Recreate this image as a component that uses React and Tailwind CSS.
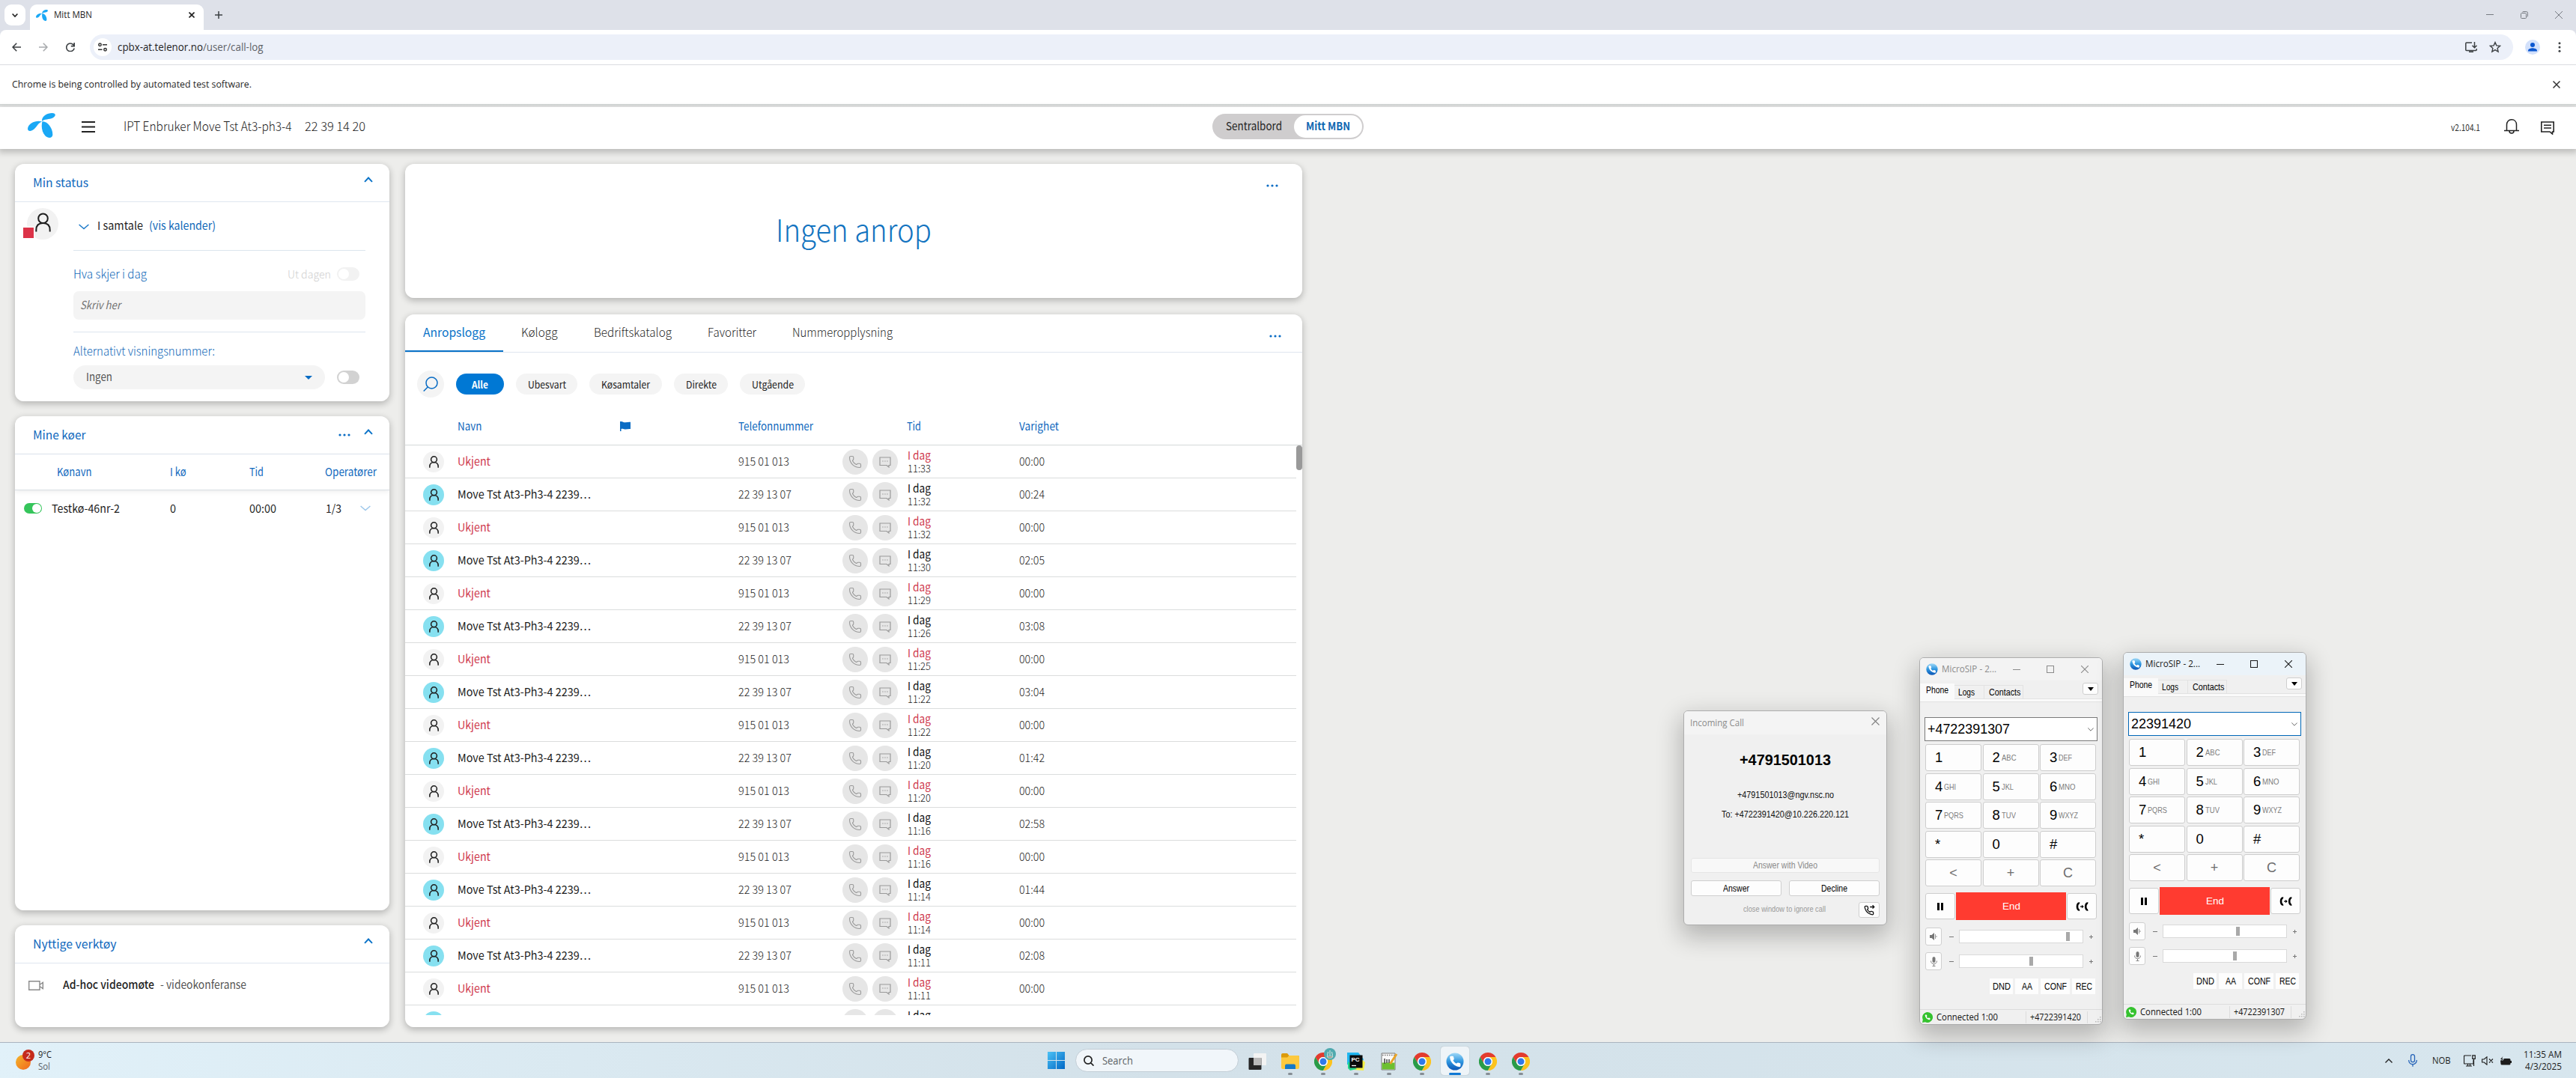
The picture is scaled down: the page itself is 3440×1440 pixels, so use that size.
import React, { useLayoutEffect, useRef, useState } from "react";
import { Phone } from "lucide-react";

const TN = "font-['Noto_Sans_CJK_SC','Noto_Sans',sans-serif]";
const UI = "font-['Open_Sans','Noto_Sans',sans-serif]";
const AR = "font-['Liberation_Sans',Arial,sans-serif]";

/* A one-line label whose glyphs are condensed or widened to fill w pixels. */
function T({ w, className = "", children }) {
  const ref = useRef(null);
  const [k, setK] = useState(1);
  useLayoutEffect(() => {
    const range = document.createRange();
    range.selectNodeContents(ref.current);
    const natural = range.getBoundingClientRect().width;
    if (natural) setK(w / natural);
  }, [w]);
  return (
    <span className={"inline-block shrink-0 whitespace-nowrap " + className} style={{ width: w }}>
      <span ref={ref} className="inline-block origin-left whitespace-nowrap" style={{ transform: `scaleX(${k})` }}>
        {children}
      </span>
    </span>
  );
}

function Logo({ className }) {
  return (
    <svg viewBox="0 0 37 33" className={className} fill="#1aa8f5" preserveAspectRatio="none">
      <path d="M19 11C18.500 4 26 0 32.500 0C38 0 38 4 33.500 6.500C29 9 22 7.500 19 11Z" />
      <path d="M19 11.500C12 9 .5 13.500 0 21C0 24.500 4.500 25 8.500 21.500C13 17.500 14 13 19 11.500Z" />
      <path d="M19.500 11.300C26 10.500 33.500 20 33.300 29C33 34 27 34 23.500 30.500C18.500 25 18 17 19.500 11.300Z" />
    </svg>
  );
}

function Line({ d, className, sw = 1.5, vb = "0 0 24 24" }) {
  return (
    <svg viewBox={vb} className={"shrink-0 " + className} fill="none" stroke="currentColor" strokeWidth={sw}>
      <path d={d} />
    </svg>
  );
}

function Dots({ className = "" }) {
  return (
    <svg viewBox="0 0 16 4" className={"h-1 w-4 shrink-0 " + className} fill="#0a6cc4">
      <circle cx="2" cy="2" r="1.6" />
      <circle cx="8" cy="2" r="1.6" />
      <circle cx="14" cy="2" r="1.6" />
    </svg>
  );
}

function Person({ className, sw = 2.1 }) {
  return (
    <svg viewBox="0 0 22 27" className={className} fill="none" stroke="#1f1f1f" strokeWidth={sw}>
      <circle cx="11" cy="8" r="6.600" />
      <path d="M1.400 26.500V24C1.400 18 5 14.500 11 14.500S20.600 18 20.600 24V26.500" />
    </svg>
  );
}

/* ---------- Browser chrome ---------- */

function TabStrip() {
  return (
    <div className="flex h-10 items-start bg-[#dee1e9] pt-1.5">
      <div className="ml-1.5 flex h-7 w-7 items-center justify-center rounded-[9px] bg-white">
        <Line className="h-2 w-2 text-[#222]" vb="0 0 8 8" sw={1.7} d="M.6 2.500 4 6l3.400-3.500" />
      </div>
      <div className="ml-1.5 flex h-[34px] w-[232px] items-center rounded-t-[9px] bg-white pb-1.5">
        <Logo className="ml-2 h-[15px] w-4" />
        <T w={51} className="ml-2 text-[12px] leading-4 text-[#1f1f1f]">Mitt MBN</T>
        <Line className="ml-[129px] h-2 w-2 text-[#222]" vb="0 0 8 8" sw={1.6} d="M.5.500l7 7M7.500.500l-7 7" />
      </div>
      <Line className="ml-[15px] mt-[9px] h-2.5 w-2.5 text-[#3c4043]" vb="0 0 10 10" sw={1.5} d="M5 0v10M0 5h10" />
      <div className="ml-auto mr-[18px] flex items-center gap-9 pt-[9px] text-[#777b82]">
        <Line className="h-2.5 w-2.5" vb="0 0 10 10" sw={1} d="M0 4.500h10" />
        <Line className="h-2.5 w-2.5" vb="0 0 10 10" sw={1} d="M.5 3.500q0-1 1-1h5q1 0 1 1v5q0 1-1 1h-5q-1 0-1-1zM2.500 1Q3 .500 4 .500h3.500q2 0 2 2V6q0 1-.6 1.500" />
        <Line className="h-2.5 w-2.5" vb="0 0 10 10" sw={1} d="M0 0l10 10M10 0 0 10" />
      </div>
    </div>
  );
}

function Toolbar() {
  return (
    <div className="flex h-[47px] items-center bg-[#dee1e9]">
      <div className="flex h-full w-full items-center rounded-t-[8px] border-b border-[#dadce0] bg-white">
        <Line className="ml-4 h-3 w-3 text-[#3c4043]" vb="0 0 12 12" sw={1.6} d="M12 6H1M6.200.700 1 6l5.200 5.300" />
        <Line className="ml-6 h-3 w-3 text-[#a8abae]" vb="0 0 12 12" sw={1.6} d="M0 6h11M5.800.700 11 6l-5.200 5.300" />
        <Line className="ml-6 h-3 w-3 text-[#3c4043]" vb="0 0 12 12" sw={1.6} d="M11 4.500A5.300 5.300 0 1 0 11.200 7.500M11.200 0v4.600H6.800" />
        <div className="ml-5 flex h-[34px] w-[3236px] items-center rounded-full bg-[#ecf0f9] pl-[5px]">
          <div className="flex h-6 w-6 items-center justify-center rounded-full bg-white">
            <svg viewBox="0 0 12 12" className="h-3 w-3" fill="none" stroke="#333" strokeWidth="1.5">
              <circle cx="2.500" cy="2.800" r="1.700" />
              <path d="M6 2.800h6M0 9.200h5.500" />
              <circle cx="9.500" cy="9.200" r="1.700" />
            </svg>
          </div>
          <T w={194.500} className="ml-2 text-[14px] leading-5 text-[#1f1f1f]">cpbx-at.telenor.no<span className="text-[#5f6368]">/user/call-log</span></T>
          <div className="ml-auto mr-4 flex items-center gap-4">
            <Line className="h-4 w-4 text-[#3c4043]" vb="0 0 16 16" sw={1.5} d="M9 2H1.800q-1 0-1 1v8.500q0 1 1 1h12.400q1 0 1-1V10M5 14.200h6M12.500 1v7.500M9.500 5.700l3 3 3-3" />
            <Line className="h-4 w-4 text-[#3c4043]" vb="0 0 16 16" sw={1.4} d="M8 1.600l1.900 4.300 4.700.4-3.500 3.100 1 4.600L8 11.600 3.900 14l1-4.600L1.400 6.300l4.700-.4z" />
          </div>
        </div>
        <svg viewBox="0 0 20 20" className="ml-4 h-5 w-5">
          <circle cx="10" cy="10" r="10" fill="#d3e1fb" />
          <circle cx="10" cy="7" r="3" fill="#0b57d0" />
          <path d="M4 15.500v-1C4 12 8 11.200 10 11.200s6 .800 6 3.300v1z" fill="#0b57d0" />
        </svg>
        <svg viewBox="0 0 4 14" className="ml-6 h-3.5 w-1" fill="#3c4043">
          <circle cx="2" cy="1.700" r="1.500" />
          <circle cx="2" cy="7" r="1.500" />
          <circle cx="2" cy="12.300" r="1.500" />
        </svg>
      </div>
    </div>
  );
}

function AppHeader() {
  return (
    <div className={"relative z-10 flex h-14 items-center bg-white shadow-[0_3px_8px_2px_rgba(0,0,0,0.2)] " + TN}>
      <Logo className="mb-[7px] ml-[37px] h-[33px] w-[37px]" />
      <Line className="ml-[35px] mt-[-4px] h-[15px] w-[18px] text-[#222]" vb="0 0 18 15" sw={1.8} d="M0 1h18M0 7.500h18M0 14h18" />
      <T w={224.500} className="ml-[38px] mt-[-7px] text-[17px] font-light leading-6 text-[#1c1c1c]">IPT Enbruker Move Tst At3-ph3-4</T>
      <T w={81} className="ml-[17px] mt-[-7px] text-[17px] font-light leading-6 text-[#1c1c1c]">22 39 14 20</T>
      <div className="mb-[4px] ml-[1131px] flex h-[34px] w-[202px] items-center rounded-full bg-[#cfcdce] pl-[18px] pr-0.5">
        <T w={75} className="-mt-0.5 text-[15px] leading-5 text-[#1f1f1f]">Sentralbord</T>
        <div className="ml-auto flex h-[30px] w-[91px] items-center justify-center rounded-full bg-white">
          <T w={59} className="-mt-0.5 text-[15px] font-bold leading-5 text-[#0f68b2]">Mitt MBN</T>
        </div>
      </div>
      <T w={39} className="-mt-0.5 ml-auto text-[12px] leading-4 text-[#333]">v2.104.1</T>
      <Line className="mb-1 ml-[32px] h-5 w-5 text-[#222]" vb="0 0 20 20" sw={1.5} d="M3.500 15.500V7.500C3.500 3.500 6 .8 10 .8s6.500 2.700 6.500 6.700v8M0 15.500h20M7 16c0 4 6 4 6 0" />
      <Line className="mb-px ml-[29px] mr-[29px] h-[18px] w-[18px] text-[#222]" vb="0 0 18 18" sw={1.6} d="M.8 1h16.400v13H15.500v3L12 14H.8zM4 5.300h10M4 9h10" />
    </div>
  );
}

/* ---------- Left column ---------- */

function CardHead({ w, title, dots }) {
  return (
    <div className="flex h-[51px] shrink-0 items-center border-b border-[#dfe6ef] pl-6">
      <T w={w} className="-mt-[3px] text-[16px] leading-5 text-[#0f68bd]">{title}</T>
      {dots && <Dots className="ml-auto" />}
      <Line className={(dots ? "ml-[18px]" : "ml-auto") + " mb-2 mr-[22px] h-2 w-3 text-[#0a73c8]"} vb="0 0 12 8" sw={1.9} d="M1 6.800 6 1.500l5 5.300" />
    </div>
  );
}

const card = "flex flex-col overflow-hidden rounded-[12px] bg-white";
const cardShadow = "rounded-[12px] shadow-[0_3px_8px_1px_rgba(0,0,0,0.22)]";

function StatusCard() {
  return (
    <div className={cardShadow}>
      <div className={card + " h-[317px]"}>
        <CardHead w={74} title="Min status" />
        <div className="flex">
          <div className="relative ml-4 mt-2 flex h-[42px] w-[42px] items-center justify-center rounded-full bg-[#f2f2f2]">
            <Person className="mb-1 h-[26px] w-[21px]" />
            <div className="absolute -left-[5px] top-[25px] h-[15px] w-[15px] border-r border-t border-white bg-[#dc3348]" />
          </div>
          <div className="ml-5 flex w-[390px] flex-col">
            <div className="flex h-16 items-center pb-px">
              <Line className="ml-[7px] mt-[2px] h-2 w-3.5 text-[#1a78c8]" vb="0 0 14 8" sw={1.4} d="M.6 1 7 6.500 13.400 1" />
              <T w={61} className="-mt-px ml-[11px] text-[15px] leading-5 text-[#1f1f1f]">I samtale</T>
              <T w={89} className="-mt-px ml-2 text-[15px] leading-5 text-[#0f68b8]">(vis kalender)</T>
            </div>
            <div className="h-px bg-[#dce5ee]" />
            <div className="flex h-[54px] items-center pt-2">
              <T w={98} className="-mt-[3px] text-[16px] font-light leading-5 text-[#0f68b8]">Hva skjer i dag</T>
              <T w={58} className="-mt-px ml-auto text-[15px] font-light leading-5 text-[#cfcfcf]">Ut dagen</T>
              <div className="ml-2 mr-2 flex h-[18px] w-[30px] items-center rounded-full bg-[#f2f2f2] pl-0.5">
                <div className="h-3.5 w-3.5 rounded-full bg-white" />
              </div>
            </div>
            <div className="flex h-[38px] items-center rounded-[7px] bg-[#f4f4f4] pl-[9px]">
              <T w={54} className="-mt-0.5 text-[15px] italic leading-5 text-[#757575]">Skriv her</T>
            </div>
            <div className="mt-4 h-px bg-[#dce5ee]" />
            <T w={189} className="mt-[14px] text-[16px] font-light leading-5 text-[#0f68b8]">Alternativt visningsnummer:</T>
            <div className="mt-[10px] flex items-center">
              <div className="flex h-8 w-[336px] items-center justify-between rounded-full bg-[#f4f4f4] pl-[17px] pr-[17px]">
                <T w={35} className="-mt-0.5 text-[15px] leading-5 text-[#555]">Ingen</T>
                <svg viewBox="0 0 10 5" className="h-[5px] w-2.5" fill="#0a6cc4"><path d="M0 0h10L5 5z" /></svg>
              </div>
              <div className="ml-4 flex h-[18px] w-[30px] items-center rounded-full bg-[#d2d2d2] pl-0.5">
                <div className="h-3.5 w-3.5 rounded-full bg-white" />
              </div>
            </div>
          </div>
        </div>
      </div>
    </div>
  );
}

function QueueCard() {
  const h = "-mt-0.5 text-[15px] leading-5 text-[#0f68bd]";
  const c = "-mt-px text-[15px] leading-5 text-[#1f1f1f]";
  return (
    <div className={cardShadow}>
      <div className={card + " h-[660px]"}>
        <CardHead w={70.500} title="Mine køer" dots />
        <div className="grid h-12 shrink-0 grid-cols-[151px_106px_101px_70px] items-center border-b border-[#d8dee4] pl-[56px] shadow-[0_2px_6px_rgba(0,0,0,0.07)]">
          <T w={46.500} className={h}>Kønavn</T>
          <T w={21.500} className={h}>I kø</T>
          <T w={19} className={h}>Tid</T>
          <T w={69} className={h}>Operatører</T>
        </div>
        <div className="grid h-12 grid-cols-[37px_158px_106px_102px_46px_20px] items-center pl-3">
          <div className="flex h-3.5 w-6 items-center justify-end rounded-full bg-[#35c55b] pr-px">
            <div className="h-3 w-3 rounded-full bg-white" />
          </div>
          <T w={91} className={c}>Testkø-46nr-2</T>
          <T w={8} className={c}>0</T>
          <T w={36} className={c}>00:00</T>
          <T w={21} className={c}>1/3</T>
          <Line className="h-2 w-3.5 text-[#9cc6ea]" vb="0 0 14 8" sw={1.4} d="M.6 1 7 6.500 13.400 1" />
        </div>
      </div>
    </div>
  );
}

function ToolsCard() {
  return (
    <div className={cardShadow}>
      <div className={card + " h-[136px]"}>
        <CardHead w={111.500} title="Nyttige verktøy" />
        <div className="flex h-[58px] items-center pl-[18px]">
          <Line className="h-[13px] w-5 text-[#8a8a8a]" vb="0 0 20 13" sw={1.4} d="M.7.700H15v11.600H.7zM15 5.500l4.300-3.200v8.400L15 7.500" />
          <T w={122} className="-mt-[3px] ml-[26px] text-[15px] font-medium leading-5 text-[#1f1f1f]">Ad-hoc videomøte</T>
          <T w={115} className="-mt-[3px] ml-2 text-[15px] leading-5 text-[#555]">- videokonferanse</T>
        </div>
      </div>
    </div>
  );
}

/* ---------- Call log ---------- */

const calls = [
  ["11:33", "00:00"], ["11:32", "00:24"], ["11:32", "00:00"], ["11:30", "02:05"], ["11:29", "00:00"],
  ["11:26", "03:08"], ["11:25", "00:00"], ["11:22", "03:04"], ["11:22", "00:00"], ["11:20", "01:42"],
  ["11:20", "00:00"], ["11:16", "02:58"], ["11:16", "00:00"], ["11:14", "01:44"], ["11:14", "00:00"],
  ["11:11", "02:08"], ["11:11", "00:00"],
];

const rowGrid = "grid h-11 shrink-0 grid-cols-[46px_375px_139px_40px_47px_149px_1fr] items-center border-b border-[#dbdddd] pl-6";

function Avatar({ missed }) {
  return (
    <div className={"flex h-7 w-7 items-center justify-center rounded-full " + (missed ? "bg-[#f2f2f2]" : "bg-[#86e0f0]")}>
      <Person className="h-[16px] w-[13px]" sw={2.600} />
    </div>
  );
}

function CallButton() {
  return (
    <div className="flex h-[34px] w-[34px] items-center justify-center rounded-full bg-[#e6e6e6]">
      <Phone className="h-[18px] w-[18px] text-[#9a9a9a]" strokeWidth={1.5} />
    </div>
  );
}

function ChatButton() {
  return (
    <div className="flex h-[34px] w-[34px] items-center justify-center rounded-full bg-[#e6e6e6]">
      <Line className="h-4 w-4 text-[#9a9a9a]" vb="0 0 16 16" sw={1.2} d="M1 2h14v10.500h-2V15l-3-2.500H1zM4.200 7h1.500M7.200 7h1.500M10.200 7h1.500" />
    </div>
  );
}

function CallRow({ time, dur, missed }) {
  return (
    <div className={rowGrid}>
      <Avatar missed={missed} />
      {missed ? (
        <T w={44} className="-mt-px text-[15px] leading-5 text-[#cf3a4e]">Ukjent</T>
      ) : (
        <T w={178} className="-mt-px text-[15px] leading-5 text-[#1c1c1c]">Move Tst At3-Ph3-4 2239…</T>
      )}
      <T w={missed ? 68 : 71} className="-mt-px text-[15px] font-light leading-5 text-[#1c1c1c]">{missed ? "915 01 013" : "22 39 13 07"}</T>
      <CallButton />
      <ChatButton />
      <div className="flex flex-col">
        <T w={31} className={"-mt-px text-[15px] leading-[17px] " + (missed ? "text-[#cf3a4e]" : "text-[#111]")}>I dag</T>
        <T w={31} className="mt-px text-[13px] font-light leading-[17px] text-[#1c1c1c]">{time}</T>
      </div>
      <T w={34} className="-mt-px text-[15px] font-light leading-5 text-[#1c1c1c]">{dur}</T>
    </div>
  );
}

function Pill({ w, className, children }) {
  return (
    <div className={"flex h-7 items-center justify-center rounded-full bg-[#f4f4f4] text-[#222] " + className}>
      <T w={w} className="-mt-px text-[13.500px] leading-5">{children}</T>
    </div>
  );
}

function LogCard() {
  const tab = "text-[16px] font-light leading-5 text-[#2a2a2a]";
  const h = "-mt-[3px] text-[15px] leading-5 text-[#0f68bd]";
  return (
    <div className={cardShadow}>
      <div className={card + " h-[952px]"}>
        <div className="flex h-[51px] shrink-0 border-b border-[#dfe6ef]">
          <div className="flex h-[50px] w-[131px] items-center justify-center border-b-2 border-[#0a73c8]">
            <T w={83} className="-mt-[3px] text-[16px] leading-5 text-[#0a73c8]">Anropslogg</T>
          </div>
          <div className="flex h-12 items-center pb-[3px] pl-6">
            <T w={48.500} className={tab}>Kølogg</T>
            <T w={104} className={tab + " ml-[48px]"}>Bedriftskatalog</T>
            <T w={65} className={tab + " ml-[48px]"}>Favoritter</T>
            <T w={134} className={tab + " ml-[48px]"}>Nummeropplysning</T>
          </div>
          <Dots className="ml-auto mr-7 mt-[27px]" />
        </div>
        <div className="mt-[24px] flex h-9 shrink-0 items-center gap-4 pl-4">
          <div className="flex h-9 w-9 items-center justify-center rounded-full bg-[#f4f4f4]">
            <svg viewBox="0 0 20 20" className="mr-px h-5 w-5" fill="none" stroke="#0a6cc4" strokeWidth="1.500">
              <circle cx="11.500" cy="8.500" r="7.500" />
              <path d="M6.500 13.800.7 19.500" />
            </svg>
          </div>
          <div className="flex h-7 w-16 items-center justify-center rounded-full bg-[#0078d4]">
            <T w={22} className="-mt-px text-[13.500px] font-bold leading-5 text-white">Alle</T>
          </div>
          <Pill w={51} className="w-[82px]">Ubesvart</Pill>
          <Pill w={65} className="w-[97px]">Køsamtaler</Pill>
          <Pill w={41} className="w-[72px]">Direkte</Pill>
          <Pill w={56} className="w-[87px]">Utgående</Pill>
        </div>
        <div className="mt-[16px] grid h-[48px] shrink-0 grid-cols-[217px_158px_225px_150px_1fr] items-center border-b border-[#d5d8d8] pl-[70px]">
          <T w={32.500} className={h}>Navn</T>
          <svg viewBox="0 0 14 13" className="mb-[3px] h-[13px] w-3.5" fill="#0a6cc4"><path d="M0 0c2.500-.5 4.500 1.500 7 1.300S11.500.5 14 .800V10c-2.500-.5-5 .8-7.500.5S3.500 9.500 1.500 10v3H0z" /></svg>
          <T w={100} className={h}>Telefonnummer</T>
          <T w={19} className={h}>Tid</T>
          <T w={53} className={h}>Varighet</T>
        </div>
        <div className="flex h-[761px] shrink-0 overflow-hidden">
          <div className="flex w-[1190px] flex-col">
            {calls.map(([t, d], i) => (
              <CallRow key={i} time={t} dur={d} missed={i % 2 === 0} />
            ))}
            <div className={rowGrid}>
              <Avatar />
              <span />
              <span />
              <CallButton />
              <ChatButton />
              <T w={31} className="-mt-[18px] text-[15px] leading-[17px] text-[#111]">I dag</T>
            </div>
          </div>
          <div className="h-[33px] w-2 rounded-full bg-[#999]" />
        </div>
      </div>
    </div>
  );
}

function NoCallCard() {
  return (
    <div className={cardShadow}>
      <div className={card + " h-[179px] items-center"}>
        <Dots className="ml-auto mr-8 mt-[27px]" />
        <T w={208} className="mt-[25px] text-[41px] font-light leading-[60px] text-[#1273c0]">Ingen anrop</T>
      </div>
    </div>
  );
}

/* ---------- Desktop windows ---------- */

const phoneD = "M22 16.920v3a2 2 0 0 1-2.180 2 19.790 19.790 0 0 1-8.630-3.070 19.500 19.500 0 0 1-6-6 19.790 19.790 0 0 1-3.070-8.670A2 2 0 0 1 4.110 2h3a2 2 0 0 1 2 1.720c.127.960.361 1.903.700 2.810a2 2 0 0 1-.450 2.110L8.090 9.910a16 16 0 0 0 6 6l1.270-1.270a2 2 0 0 1 2.110-.450c.907.339 1.850.573 2.810.700A2 2 0 0 1 22 16.920z";

function SipIcon({ className }) {
  return (
    <svg viewBox="0 0 24 24" className={className}>
      <defs>
        <linearGradient id="sip" x1="0" y1="0" x2="0" y2="1">
          <stop offset="0" stopColor="#9fd8f7" />
          <stop offset="0.500" stopColor="#2f97e0" />
          <stop offset="1" stopColor="#0b55b5" />
        </linearGradient>
      </defs>
      <circle cx="12" cy="12" r="11.500" fill="url(#sip)" />
      <path d={phoneD} fill="#fff" transform="translate(3.600 3.400) scale(0.720)" />
    </svg>
  );
}

const frame = "flex flex-col overflow-hidden rounded-[6px] border border-[#adadad] bg-[#f0f0f0] shadow-[0_12px_32px_4px_rgba(0,0,0,0.24)]";

function IncomingCall() {
  const btn = "flex h-[21px] items-center justify-center rounded-[3px] border border-[#cfcfcf] bg-[#fdfdfd]";
  return (
    <div className={"absolute left-[2248px] top-[949px] h-[287px] w-[272px] " + frame + " " + AR}>
      <div className="flex h-[31px] shrink-0 items-center justify-between bg-[#f4f4f4] pl-2 pr-[9px]">
        <T w={72} className={"text-[12px] leading-4 text-[#8b8b8b] " + UI}>Incoming Call</T>
        <Line className="mb-1 h-[11px] w-[11px] text-[#808080]" vb="0 0 11 11" sw={1.1} d="M.5.500l10 10M10.500.500l-10 10" />
      </div>
      <div className="flex flex-col items-center">
        <T w={122} className="mt-[22px] text-[20px] font-bold leading-6 text-black">+4791501013</T>
        <T w={129} className="mt-[27px] text-[12px] leading-4 text-[#111]">+4791501013@ngv.nsc.no</T>
        <T w={170} className="mt-2.5 text-[12px] leading-4 text-[#111]">To: +4722391420@10.226.220.121</T>
      </div>
      <div className="mt-[50px] px-[9px]">
        <div className="flex h-[20px] items-center justify-center rounded-[3px] border border-[#e5e5e5] bg-[#f8f8f8]">
          <T w={86} className="text-[12px] leading-4 text-[#8a8a8a]">Answer with Video</T>
        </div>
        <div className="mt-2.5 flex justify-between">
          <div className={btn + " w-[121px]"}><T w={35} className="text-[12px] leading-4 text-black">Answer</T></div>
          <div className={btn + " w-[121px]"}><T w={35} className="text-[12px] leading-4 text-black">Decline</T></div>
        </div>
        <div className="mt-2 flex">
          <T w={110} className="ml-[70px] mt-0.5 text-[10px] leading-4 text-[#9a9a9a]">close window to ignore call</T>
          <div className={btn + " ml-auto w-[28px]"}>
            <svg viewBox="0 0 24 24" className="h-[15px] w-[15px]" fill="none" stroke="#111" strokeWidth="2.200">
              <path d={phoneD} transform="translate(0 2) scale(0.920)" />
              <path d="M13 5.500h9M18.500 2l3.500 3.500L18.500 9" />
            </svg>
          </div>
        </div>
      </div>
    </div>
  );
}

const keys = [
  ["1", ""], ["2", "ABC", 19.500], ["3", "DEF", 18], ["4", "GHI", 16], ["5", "JKL", 16], ["6", "MNO", 22.500],
  ["7", "PQRS", 26], ["8", "TUV", 19], ["9", "WXYZ", 26], ["*", ""], ["0", ""], ["#", ""],
];

function Slider({ thumb }) {
  return (
    <div className="flex h-[18px] w-[166px] items-center border border-[#d9d9d9] bg-white" style={{ paddingLeft: thumb }}>
      <div className="h-3 w-[5px] bg-[#a9a9a9]" />
    </div>
  );
}

function VolumeRow({ icon, thumb }) {
  return (
    <div className="flex h-6 items-center">
      <div className="flex h-6 w-[22px] items-center justify-center rounded-[3px] border border-[#cfcfcf] bg-[#fdfdfd]">{icon}</div>
      <div className="ml-2.5 h-px w-1.5 bg-[#777]" />
      <div className="ml-[7px]"><Slider thumb={thumb} /></div>
      <Line className="ml-[8px] h-[5px] w-[5px] text-[#777]" vb="0 0 5 5" sw={1} d="M2.500 0v5M0 2.500h5" />
    </div>
  );
}

function MicroSip({ pos, active, number, remote, vol, mic }) {
  const key = "flex h-9 items-center rounded-[3px] border border-[#cdcdcd] bg-[#fdfdfd]";
  const tc = active ? "text-[#1a1a1a]" : "text-[#8b8b8b]";
  const chip = "flex h-[21px] items-center justify-center bg-[#fdfdfd]";
  return (
    <div className={"absolute h-[491px] w-[245px] " + frame + " " + AR + " " + pos}>
      <div className={"flex h-[30px] shrink-0 items-center pl-2 " + tc + (active ? " bg-[#ebf3f9]" : " bg-[#f3f3f3]")}>
        <SipIcon className="h-4 w-4" />
        <T w={73} className={"ml-[5px] text-[12px] leading-4 " + UI}>MicroSIP - 2...</T>
        <Line className="ml-[22px] h-2.5 w-2.5" vb="0 0 10 10" sw={1} d="M0 5.500h10" />
        <Line className="ml-[35px] h-2.5 w-2.5" vb="0 0 10 10" sw={1.1} d="M.5.500h9v9h-9z" />
        <Line className="ml-[36px] h-2.5 w-2.5" vb="0 0 10 10" sw={1.1} d="M0 0l10 10M10 0 0 10" />
      </div>
      <div className="flex h-[29px] shrink-0 items-end border-b border-[#e2e2e2] text-[12px] text-black">
        <div className="flex h-6 w-[46px] items-center justify-center bg-[#fafafa] pb-1.5"><T w={30} className="leading-4">Phone</T></div>
        <div className="flex flex-1 flex-col">
          <div className="flex">
            <div className="flex h-[18px] w-10 items-center border-r border-t border-[#e2e2e2] pl-[5px]"><T w={22} className="leading-4">Logs</T></div>
            <div className="flex h-[18px] w-[52px] items-center border-r border-t border-[#e2e2e2] pl-[6px]"><T w={42.500} className="leading-4">Contacts</T></div>
            <div className="-mt-[3px] ml-auto mr-[5px] flex h-4 w-[21px] items-center justify-center rounded-[3px] border border-[#cfcfcf] bg-[#fdfdfd]">
              <svg viewBox="0 0 8 5" className="h-[5px] w-2" fill="#000"><path d="M0 0h8L4 5z" /></svg>
            </div>
          </div>
          <div className="h-1 border-t border-[#e2e2e2] bg-[#fafafa]" />
        </div>
      </div>
      <div className="pl-[6px]">
        <div className={"mt-[20px] flex h-8 w-[231px] items-center justify-between border bg-white pl-[3px] pr-1 " + (active ? "border-[#0067b8]" : "border-[#7a7a7a]")}>
          <T w={active ? 80 : 110} className="text-[19px] leading-6 text-black">{number}</T>
          <Line className="h-[5px] w-2 text-[#666]" vb="0 0 8 5" sw={1} d="M.3.500 4 4.200 7.700.500" />
        </div>
        <div className="ml-px mt-1 grid w-[228px] grid-cols-[75px_75px_75px] gap-x-[1.500px] gap-y-[2.500px]">
          {keys.map(([d, l, w]) => (
            <div key={d} className={key + " pl-3"}>
              <span className="w-[11px] text-[18.500px] leading-6 text-black">{d}</span>
              {l && <T w={w} className="ml-px text-[10.500px] leading-4 text-[#7d7d7d]">{l}</T>}
            </div>
          ))}
          {["<", "+", "C"].map((d) => (
            <div key={d} className={key + " justify-center text-[18px] leading-6 text-[#6d6d6d]"}>{d}</div>
          ))}
        </div>
        <div className="ml-px mt-[8px] flex h-[37px] items-center">
          <div className="flex h-[35px] w-10 items-center justify-center rounded-[3px] border border-[#cdcdcd] bg-[#fdfdfd]">
            <div className="h-2.5 w-2 border-x-[3px] border-black" />
          </div>
          <div className="ml-px flex h-[37px] w-[147px] items-center justify-center bg-[#ff3b30]">
            <T w={24} className="text-[13.500px] leading-5 text-white">End</T>
          </div>
          <div className="ml-px flex h-[35px] w-10 items-center justify-center rounded-[3px] border border-[#cdcdcd] bg-[#fdfdfd]">
            <svg viewBox="0 0 17 12" className="h-3 w-[17px]" fill="none" stroke="#000">
              <path d="M5 1.800C1 .2 1 11.800 5 10.200M16.200 1.800c-4-1.600-4 10 0 8.400" strokeWidth="2.600" />
              <path d="M6 6h4" strokeWidth="1.300" />
              <path d="M8 3.800 10.800 6 8 8.200z" fill="#000" stroke="none" />
            </svg>
          </div>
        </div>
        <div className="ml-px mt-[10px] flex flex-col gap-[9px]">
          <VolumeRow thumb={vol} icon={
            <svg viewBox="0 0 10 10" className="h-2.5 w-2.5" fill="#777"><path d="M0 3h2.500L6 0v10L2.500 7H0z" /><path d="M7.500 2v6M9 4v2" stroke="#999" /></svg>
          } />
          <VolumeRow thumb={mic} icon={
            <svg viewBox="0 0 9 13" className="h-[13px] w-[9px]" fill="none" stroke="#888"><rect x="3" y="0.500" width="3" height="7" rx="1.500" fill="#777" stroke="#777" /><path d="M.5 5.500C.5 11 8.500 11 8.500 5.500M4.500 10v2.500M2.500 12.500h4" /></svg>
          } />
        </div>
        <div className="mt-[11px] flex justify-end gap-[3px] pr-[9px] text-[12px] text-black">
          <div className={chip + " w-[31px]"}><T w={24} className="leading-4">DND</T></div>
          <div className={chip + " w-[31px]"}><T w={14} className="leading-4">AA</T></div>
          <div className={chip + " w-[39px]"}><T w={30} className="leading-4">CONF</T></div>
          <div className={chip + " w-[31px]"}><T w={22} className="leading-4">REC</T></div>
        </div>
      </div>
      <div className={"mt-auto flex h-[20px] shrink-0 items-center border-t border-[#dcdcdc] pl-[3px] text-[12px] text-[#111] " + UI}>
        <svg viewBox="0 0 14 14" className="h-3.5 w-3.5">
          <path d="M7 0a7 7 0 1 1-3 13.300L0 14l.8-4A7 7 0 0 1 7 0z" fill="#35c22f" />
          <path d={phoneD} fill="#fff" transform="translate(3 2.800) scale(0.340)" />
        </svg>
        <T w={82} className="ml-[5px] leading-4">Connected 1:00</T>
        <div className="ml-[37px] h-4 w-px bg-[#dcdcdc]" />
        <T w={68} className="ml-[5px] leading-4">{remote}</T>
        <div className="ml-[8px] h-4 w-px bg-[#dcdcdc]" />
        <svg viewBox="0 0 9 9" className="mb-[-5px] ml-[9px] h-[9px] w-[9px]" fill="#bbb">
          <path d="M7 1h1.600v1.600H7zM7 4h1.600v1.600H7zM7 7h1.600v1.600H7zM4 4h1.600v1.600H4zM4 7h1.600v1.600H4zM1 7h1.600v1.600H1z" />
        </svg>
      </div>
    </div>
  );
}

/* ---------- Taskbar ---------- */

function Chrome() {
  return (
    <svg viewBox="0 0 24 24" className="h-6 w-6">
      <path d="M12 6H22.400A12 12 0 0 0 1.600 6L6.800 15A6 6 0 0 1 12 6Z" fill="#e33b2e" />
      <path d="M1.600 6A12 12 0 0 0 12 24L17.200 15A6 6 0 0 1 6.800 15Z" fill="#2a9c48" />
      <path d="M12 24A12 12 0 0 0 22.400 6H12A6 6 0 0 1 17.200 15Z" fill="#fcc31e" />
      <circle cx="12" cy="12" r="6" fill="#fff" />
      <circle cx="12" cy="12" r="4.500" fill="#2f79ea" />
    </svg>
  );
}

function Task({ children, mark = true, active }) {
  return (
    <div className={"relative flex h-[38px] w-[38px] flex-col items-center rounded-[4px] pt-2 " + (active ? "bg-[#eef4f8] shadow-[0_0_1px_rgba(0,0,0,0.35)]" : "")}>
      {children}
      {mark && <div className={"mt-[3px] h-[3px] shrink-0 rounded-full " + (active ? "w-4 bg-[#0f78d4]" : "w-1.5 bg-[#858d94]")} />}
    </div>
  );
}

function Taskbar() {
  return (
    <div className={"flex h-[48px] items-center border-t border-[#aab4bf] bg-linear-to-r from-[#e1f1f9] from-0% via-[#d3e1e9] via-45% to-[#d7e6ee] " + UI}>
      <div className="relative ml-[21px] mt-[-2px] h-[28px] w-[26px]">
        <div className="mt-[7px] h-5 w-5 rounded-full bg-linear-to-br from-[#f2b62b] to-[#f0641c]" />
        <div className="absolute left-[9px] top-0 flex h-4 w-4 items-center justify-center rounded-full bg-[#c42b1c] text-[11px] leading-none text-white">2</div>
      </div>
      <div className="ml-1 flex flex-col">
        <T w={18} className="text-[12px] leading-4 text-[#1c1c1c]">9°C</T>
        <T w={16} className="text-[12px] leading-4 text-[#5b6268]">Sol</T>
      </div>
      <svg viewBox="0 0 23 23" className="ml-[1330px] h-[23px] w-[23px]">
        <defs>
          <linearGradient id="win" x1="0" y1="0" x2="1" y2="1">
            <stop offset="0" stopColor="#4cc2f5" />
            <stop offset="1" stopColor="#0067c5" />
          </linearGradient>
        </defs>
        <path d="M0 0h11v11H0zM12 0h11v11H12zM0 12h11v11H0zM12 12h11v11H12z" fill="url(#win)" />
      </svg>
      <div className="ml-3.5 flex h-[31px] w-[218px] items-center rounded-full border border-[#c3ced6] bg-[#f1f6fa] pl-2.5">
        <Line className="h-3.5 w-3.5 text-[#222]" vb="0 0 14 14" sw={1.700} d="M6 .900a5 5 0 1 0 0 10.200A5 5 0 1 0 6 .900M9.500 9.700 13.500 13.600" />
        <T w={41} className="ml-[11px] text-[14px] leading-5 text-[#5a5f64]">Search</T>
      </div>
      <div className="ml-[6px] flex gap-1.5">
        <Task mark={false}>
          <svg viewBox="0 0 24 24" className="h-6 w-6">
            <rect x="7" y="1" width="17" height="16" rx="1" fill="#f3f3f3" />
            <rect x="0.500" y="7" width="17" height="16" rx="1" fill="#262626" />
            <rect x="7" y="7" width="10.500" height="10" fill="#b9b9b9" />
          </svg>
        </Task>
        <Task>
          <svg viewBox="0 0 24 24" className="h-6 w-6">
            <path d="M0 3q0-2 2-2h6l2.500 3H22q2 0 2 2v3H0z" fill="#dc9a0a" />
            <path d="M0 6.500h8L10.500 4H22q2 0 2 2v14q0 2-2 2H2q-2 0-2-2z" fill="#fcc93f" />
            <path d="M5 22v-4.500q0-2 2-2h10q2 0 2 2V22z" fill="#1378c8" />
          </svg>
        </Task>
        <Task>
          <Chrome />
          <svg viewBox="0 0 16 16" className="absolute left-[20px] top-[2px] h-4 w-4">
            <circle cx="8" cy="8" r="8" fill="#4fa9ae" />
            <path d="M4 11h8l-1.500 2h-5zM8 3v7M5.500 5l-1 5M10.500 5l1 5" stroke="#dfe8e2" fill="#7b5b45" />
          </svg>
        </Task>
        <Task>
          <svg viewBox="0 0 24 24" className="h-6 w-6">
            <path d="M0 0h15l7 9-4 9-18-2z" fill="#1fb6f0" />
            <path d="M18 8l6 5-2 11-14-1z" fill="#f3ef45" />
            <path d="M1 12l12 10-9 2-3-3z" fill="#21d789" />
            <rect x="3.500" y="3.500" width="17" height="17" fill="#0a0a0a" />
            <text x="5.500" y="11.500" fontSize="8" fontWeight="700" fill="#fff" fontFamily="Liberation Sans">PC</text>
            <path d="M6 17.500h6" stroke="#fff" strokeWidth="1.300" />
          </svg>
        </Task>
        <Task>
          <svg viewBox="0 0 24 24" className="h-6 w-6">
            <path d="M2 1h18v22H2z" fill="#fafafa" stroke="#777" />
            <path d="M2.500 13.500h17v9h-17z" fill="#6dc02f" />
            <path d="M3 3.500h16" stroke="#777" strokeDasharray="1.500 1.500" strokeWidth="1.500" />
            <path d="M6 8v7M9 9v5M12 9v5" stroke="#444" strokeWidth="1.500" />
            <path d="M22 2 13.500 15" stroke="#e9a326" strokeWidth="3" />
          </svg>
        </Task>
        <Task><Chrome /></Task>
        <Task active><SipIcon className="h-6 w-6" /></Task>
        <Task><Chrome /></Task>
        <Task><Chrome /></Task>
      </div>
      <div className="ml-auto mr-[19px] flex items-center">
        <Line className="h-1.5 w-2.5 text-[#222]" vb="0 0 10 6" sw={1.400} d="M.5 5.500 5 1l4.500 4.500" />
        <Line className="ml-[21px] h-[17px] w-3 text-[#2563b8]" vb="0 0 12 17" sw={1.300} d="M6 .700c-1.700 0-2.500 1-2.500 2.500v5c0 1.500.8 2.500 2.500 2.500s2.500-1 2.500-2.500v-5C8.500 1.700 7.700.700 6 .700zM.7 8c0 7.500 10.600 7.500 10.600 0M6 13.500v3.200" />
        <T w={24.500} className="ml-[20px] text-[12px] leading-4 text-[#1c1c1c]">NOB</T>
        <Line className="ml-[18px] h-4 w-4 text-[#1c1c1c]" vb="0 0 16 16" sw={1.200} d="M10 1H1.500q-1 0-1 1v9q0 1 1 1H13V7M3 15h8M5.500 12v3M8.500 12v3M11.800.8h3.500v4.500h-3.500zM13.500 5.500V15" />
        <Line className="ml-2 h-3 w-4 text-[#1c1c1c]" vb="0 0 16 12" sw={1.100} d="M.6 4h2.600L7 .800v10.400L3.200 8H.6zM10 3.500l5 5M15 3.500l-5 5" />
        <svg viewBox="0 0 16 12" className="ml-2 h-3 w-4" fill="#1c1c1c">
          <path d="M1 5.500h3.500L6 3h7q1.500 0 1.500 1.500V6H16v3h-1.500v1q0 1.500-1.500 1.500H3Q1.500 11.500 1.500 10z" />
          <path d="M4.500 0 1 4h2L1.500 7 5 3.200H3z" />
        </svg>
        <div className="ml-4 flex flex-col items-end">
          <T w={51} className="text-[12px] leading-4 text-[#1c1c1c]">11:35 AM</T>
          <T w={49} className="text-[12px] leading-4 text-[#1c1c1c]">4/3/2025</T>
        </div>
      </div>
    </div>
  );
}

export default function App() {
  return (
    <div className={"relative flex h-[1440px] w-[3440px] flex-col overflow-hidden bg-[#ededeb] " + UI}>
      <TabStrip />
      <Toolbar />
      <div className="flex h-[52px] items-center justify-between bg-white pl-4 pr-[21px]">
        <T w={320} className="text-[12px] leading-4 text-[#1f1f1f]">Chrome is being controlled by automated test software.</T>
        <Line className="h-2.5 w-2.5 text-[#333]" vb="0 0 10 10" sw={1.500} d="M.5.500l9 9M9.500.500l-9 9" />
      </div>
      <div className="h-1 bg-linear-to-b from-[#cfd3d2] to-[#f2f2f2]" />
      <AppHeader />
      <div className={"flex h-[1193px] pl-5 pt-5 " + TN}>
        <div className="flex w-[500px] flex-col gap-5">
          <StatusCard />
          <QueueCard />
          <ToolsCard />
        </div>
        <div className="ml-[21px] flex w-[1198px] flex-col gap-[22px]">
          <NoCallCard />
          <LogCard />
        </div>
      </div>
      <Taskbar />
      <IncomingCall />
      <MicroSip pos="left-[2563px] top-[878px]" number="+4722391307" remote="+4722391420" vol={142} mic={93} />
      <MicroSip pos="left-[2835px] top-[871px]" active number="22391420" remote="+4722391307" vol={97} mic={93} />
    </div>
  );
}
